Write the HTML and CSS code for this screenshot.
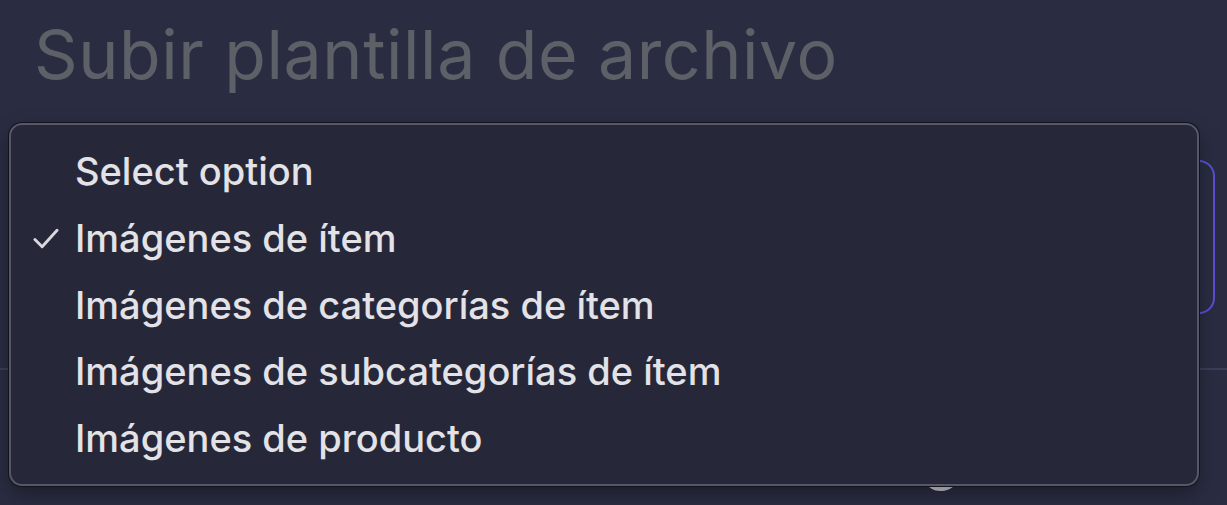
FILE: index.html
```html
<!DOCTYPE html>
<html lang="es">
<head>
<meta charset="utf-8">
<title>Subir plantilla de archivo</title>
<link rel="stylesheet" href="styles.css">
</head>
<body>
<main class="page">
  <h1 class="title">Subir plantilla de archivo</h1>
  <div class="field">
    <div class="select"></div>
  </div>
  <hr class="divider">
  <p class="below"><span class="below-glyph">g</span></p>
</main>

<ul class="menu" role="listbox">
  <li class="option"><span class="check"></span><span class="label">Select option</span></li>
  <li class="option selected"><span class="check"><svg viewBox="0 0 27 21" width="27" height="21"><path d="M2 11.5 L9.5 19 L25 2" fill="none" stroke="#d8d8de" stroke-width="3" stroke-linecap="round" stroke-linejoin="round"/></svg></span><span class="label">Imágenes de ítem</span></li>
  <li class="option"><span class="check"></span><span class="label">Imágenes de categorías de ítem</span></li>
  <li class="option"><span class="check"></span><span class="label">Imágenes de subcategorías de ítem</span></li>
  <li class="option"><span class="check"></span><span class="label">Imágenes de producto</span></li>
</ul>
</body>
</html>
```
FILE: styles.css
```css
html, body {
  margin: 0;
  padding: 0;
}
body {
  width: 1227px;
  height: 505px;
  overflow: hidden;
  background: #2a2d42;
  font-family: Inter, "Noto Sans", "DejaVu Sans", sans-serif;
  position: relative;
}
.page {
  padding: 20px 12px 0 34px;
}
.title {
  margin: 0;
  font-size: 68px;
  line-height: 68px;
  font-weight: 400;
  letter-spacing: 0.6px;
  color: #5e6068;
}
.field {
  margin-top: 72px;
  display: flex;
}
.select {
  flex: 1;
  height: 150px;
  border: 2px solid #5a4fd8;
  border-radius: 16px;
}
.divider {
  margin: 54px -12px 0 -34px;
  border: 0;
  height: 2px;
  background: #3a3e58;
}
.below {
  margin: 0;
  padding-left: 888px;
  font-size: 64px;
  line-height: 64px;
  margin-top: 52px;
  color: #c9c9d1;
}
.menu {
  position: absolute;
  left: 9px;
  top: 123px;
  width: 1186px;
  margin: 0;
  padding: 13px 0 13px 0;
  list-style: none;
  background: #262839;
  border: 2px solid #56586a;
  border-radius: 13px;
  box-shadow: 0 0 0 1px #12131b, 0 8px 20px rgba(0,0,0,0.35);
}
.option {
  display: flex;
  align-items: center;
  height: 66.7px;
  font-size: 38px;
  font-weight: 500;
  color: #e2e2e7;
}
.check {
  width: 64px;
  display: flex;
  justify-content: flex-end;
  box-sizing: border-box;
  padding-left: 22px;
}
.check svg {
  display: block;
  margin-right: 16px;
}
.label {
  white-space: nowrap;
}
```
